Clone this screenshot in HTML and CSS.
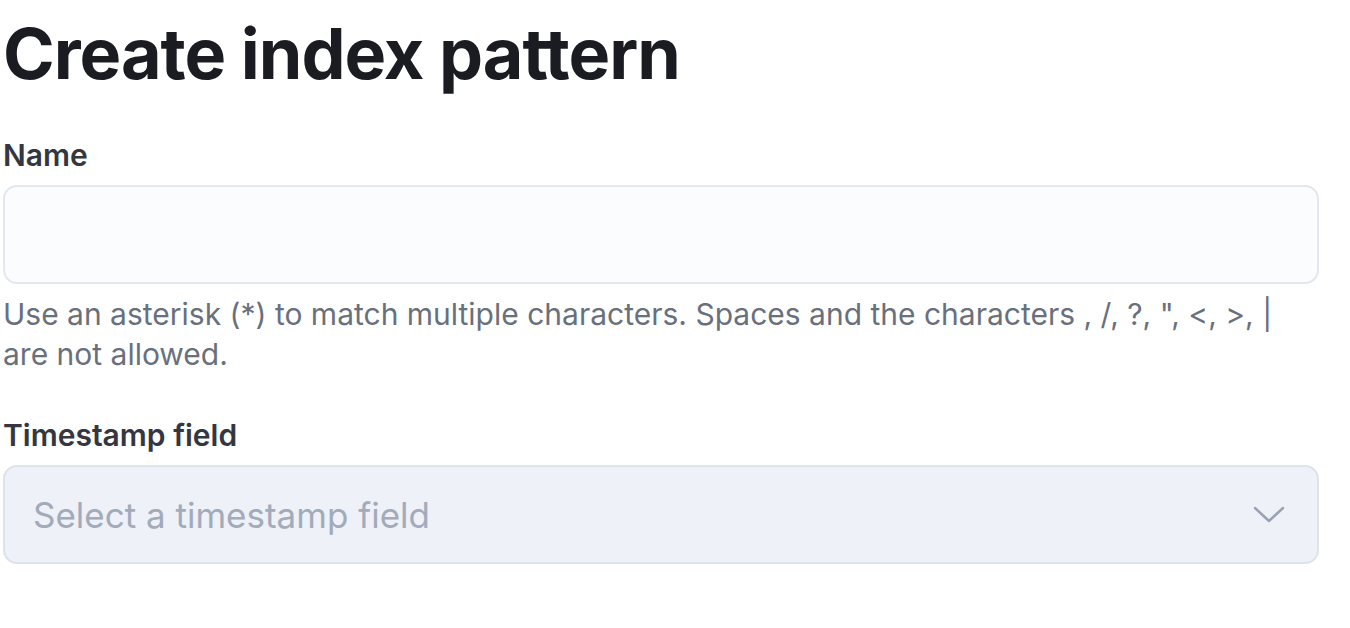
FILE: index.html
```html
<!DOCTYPE html>
<html lang="en">
<head>
<meta charset="utf-8">
<title>Create index pattern</title>
<link rel="stylesheet" href="styles.css">
</head>
<body>
<main class="page">
  <h1 class="title">Create index pattern</h1>
  <div class="field">
    <label class="label" for="name">Name</label>
    <input class="input" id="name" type="text">
    <div class="help">Use an asterisk (*) to match multiple characters. Spaces and the characters , /, ?, ", &lt;, &gt;, | are not allowed.</div>
  </div>
  <div class="field">
    <label class="label">Timestamp field</label>
    <div class="select">
      <span class="placeholder">Select a timestamp field</span>
      <svg class="chevron" width="32" height="18" viewBox="0 0 32 18"><path d="M2 2 L16 15 L30 2" fill="none" stroke="#98a2b3" stroke-width="2.5" stroke-linecap="round" stroke-linejoin="round"/></svg>
    </div>
  </div>
</main>
</body>
</html>
```

FILE: styles.css
```css
html, body {
  margin: 0;
  padding: 0;
  background: #ffffff;
}
body {
  font-family: Inter, "Noto Sans", sans-serif;
  color: #1a1c21;
}
.page {
  width: 1316px;
  padding: 0 0 0 3px;
}
.title {
  margin: 0;
  padding-top: 12px;
  font-size: 70px;
  line-height: 84px;
  font-weight: 700;
  letter-spacing: -1px;
  color: #1a1c21;
}
.field {
  display: flex;
  flex-direction: column;
}
.label {
  margin-top: 39px;
  font-size: 30px;
  line-height: 40px;
  font-weight: 600;
  color: #343741;
  padding-bottom: 10px;
}
.input {
  box-sizing: border-box;
  height: 99px;
  width: 1316px;
  margin: 0;
  border: 2px solid #e3e7f0;
  border-radius: 14px;
  background: #fbfcfd;
  outline: none;
}
.help {
  margin-top: 10px;
  margin-bottom: 2px;
  font-size: 30px;
  line-height: 40px;
  color: #69707d;
  width: 1290px;
}
.select {
  box-sizing: border-box;
  height: 99px;
  width: 1316px;
  border: 2px solid #dde2ec;
  border-radius: 14px;
  background: #eef1f7;
  display: flex;
  align-items: center;
  justify-content: space-between;
  padding: 0 32px 0 28px;
}
.placeholder {
  font-size: 35px;
  color: #a2abba;
}
.chevron {
  display: block;
}
```
